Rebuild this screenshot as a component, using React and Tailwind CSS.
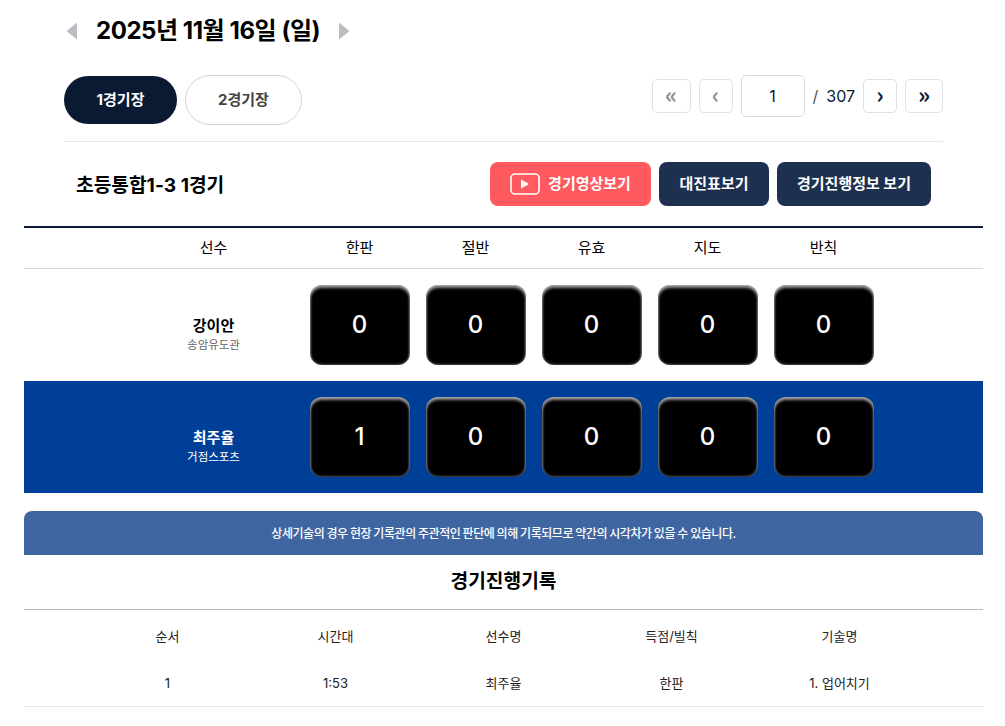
import React from "react";

const columns = ["한판", "절반", "유효", "지도", "반칙"];

const players = [
  { name: "강이안", club: "송암유도관", scores: [0, 0, 0, 0, 0], blue: false },
  { name: "최주율", club: "거점스포츠", scores: [1, 0, 0, 0, 0], blue: true },
];

const recordHeads = ["순서", "시간대", "선수명", "득점/빌칙", "기술명"];
const recordRow = ["1", "1:53", "최주율", "한판", "1. 업어치기"];

const Triangle = ({ right }) => (
  <svg width="12" height="18" viewBox="0 0 12 18" className="block">
    <path d={right ? "M1 0.5 L11.5 9 L1 17.5 Z" : "M11 0.5 L0.5 9 L11 17.5 Z"} fill="#b9bcc1" />
  </svg>
);

const PageButton = ({ label, disabled, wide }) => (
  <button
    type="button"
    className={`h-[34px] ${wide} flex items-center justify-center border border-[#dfe1e5] rounded-[5px] bg-white text-[23px] font-bold leading-none pb-[3px] font-['Noto_Sans_CJK_KR',sans-serif] ${
      disabled ? "text-[#8b9099]" : "text-[#0a1a33]"
    }`}
  >
    {label}
  </button>
);

const ScoreBox = ({ value }) => (
  <div className="w-[116px] flex justify-center">
    <div className="w-[100px] h-[80px] flex items-center justify-center rounded-[12px] bg-black shadow-[inset_0_0_3px_rgba(255,255,255,0.6),inset_0_3px_3px_rgba(255,255,255,0.55)] text-white text-[24px] font-medium">
      {value}
    </div>
  </div>
);

const PlayerRow = ({ player }) => (
  <div className={`h-[112px] flex items-center justify-center ${player.blue ? "bg-[#003f98]" : "bg-white"}`}>
    <div className="w-[176px] pt-[19px] flex flex-col items-center">
      <div className={`text-[15px] font-bold leading-[22px] ${player.blue ? "text-white" : "text-black"}`}>{player.name}</div>
      <div className={`text-[11.5px] leading-[17px] ${player.blue ? "text-white" : "text-[#666]"}`}>{player.club}</div>
    </div>
    {player.scores.map((s, i) => (
      <ScoreBox key={i} value={s} />
    ))}
  </div>
);

export default function App() {
  return (
    <div className="w-[1005px] h-[726px] overflow-hidden bg-white pl-[24px] pr-[22px] text-black font-['Inter','Noto_Sans_CJK_KR',sans-serif]">
      {/* 날짜 / 경기장 선택 */}
      <div className="px-[40px]">
        <div className="h-[62px] flex items-center pl-[2px]">
          <Triangle />
          <div className="ml-[18px] mr-[18px] text-[24px] font-bold leading-none tracking-[-0.45px]">2025년 11월 16일 (일)</div>
          <Triangle right />
        </div>

        <div className="h-[80px] pt-[13px] flex justify-between border-b border-[#e5e7eb]">
          <div className="flex items-center gap-2 h-[50px]">
            <button type="button" className="w-[113px] h-[48px] rounded-full bg-[#0a1a33] text-white text-[15px] font-bold">
              1경기장
            </button>
            <button type="button" className="w-[117px] h-[50px] rounded-full border border-[#d1d5db] bg-white text-[#444] text-[15px] font-bold">
              2경기장
            </button>
          </div>
          <div className="flex items-center gap-2 h-[42px]">
            <PageButton label="«" disabled wide="w-[39px]" />
            <PageButton label="‹" disabled wide="w-[34px]" />
            <div className="w-[64px] h-[42px] flex items-center justify-center border border-[#d9dbe0] rounded-[5px] text-[16px] text-[#0a1a33]">1</div>
            <span className="text-[16px] text-[#555]">/</span>
            <span className="text-[16px] text-[#0a1a33]">307</span>
            <PageButton label="›" wide="w-[34px]" />
            <PageButton label="»" wide="w-[38px]" />
          </div>
        </div>

        <div className="h-[84px] pt-[3px] flex items-center justify-between px-[12px]">
          <div className="text-[19.2px] font-bold">초등통합1-3 1경기</div>
          <div className="flex gap-2 -mt-[3px]">
            <button type="button" className="w-[161px] h-[44px] flex items-center justify-center gap-[8px] rounded-[8px] bg-[#ff5a5f] text-white text-[15px] font-bold">
              <svg width="30" height="22" viewBox="0 0 30 22" fill="none">
                <rect x="1" y="1" width="28" height="20" rx="4" stroke="white" strokeWidth="1.6" />
                <path d="M11 6.5 L19 11 L11 15.5 Z" fill="white" />
              </svg>
              경기영상보기
            </button>
            <button type="button" className="w-[110px] h-[44px] rounded-[8px] bg-[#1e3050] text-white text-[15px] font-bold">
              대진표보기
            </button>
            <button type="button" className="w-[154px] h-[44px] rounded-[8px] bg-[#1e3050] text-white text-[15px] font-bold">
              경기진행정보 보기
            </button>
          </div>
        </div>
      </div>

      {/* 점수판 */}
      <div>
        <div className="h-[43px] flex items-center justify-center border-t-2 border-b border-t-[#0a1a33] border-b-[#d9d9d9]">
          <div className="w-[176px] text-center text-[15px]">선수</div>
          {columns.map((c) => (
            <div key={c} className="w-[116px] text-center text-[15px]">
              {c}
            </div>
          ))}
        </div>
        {players.map((p) => (
          <PlayerRow key={p.name} player={p} />
        ))}

        <div className="mt-[18px] h-[44px] pt-[2px] flex items-center justify-center rounded-t-[8px] bg-[#3f66a0] text-white text-[12px] font-medium tracking-[-0.45px] [word-spacing:-0.5px]">
          상세기술의 경우 현장 기록관의 주관적인 판단에 의해 기록되므로 약간의 시각차가 있을 수 있습니다.
        </div>

        {/* 진행기록 */}
        <div className="h-[55px] flex items-center justify-center border-b border-[#bbb] text-[19.2px] font-bold pb-[2px]">
          경기진행기록
        </div>
        <div className="h-[52px] pt-[2px] flex items-center justify-center">
          {recordHeads.map((h) => (
            <div key={h} className="w-[168px] text-center text-[13px] text-[#222]">
              {h}
            </div>
          ))}
        </div>
        <div className="h-[45px] flex items-center justify-center border-b border-[#e5e5e5]">
          {recordRow.map((v) => (
            <div key={v} className="w-[168px] text-center text-[13px] text-[#222]">
              {v}
            </div>
          ))}
        </div>
      </div>
    </div>
  );
}
